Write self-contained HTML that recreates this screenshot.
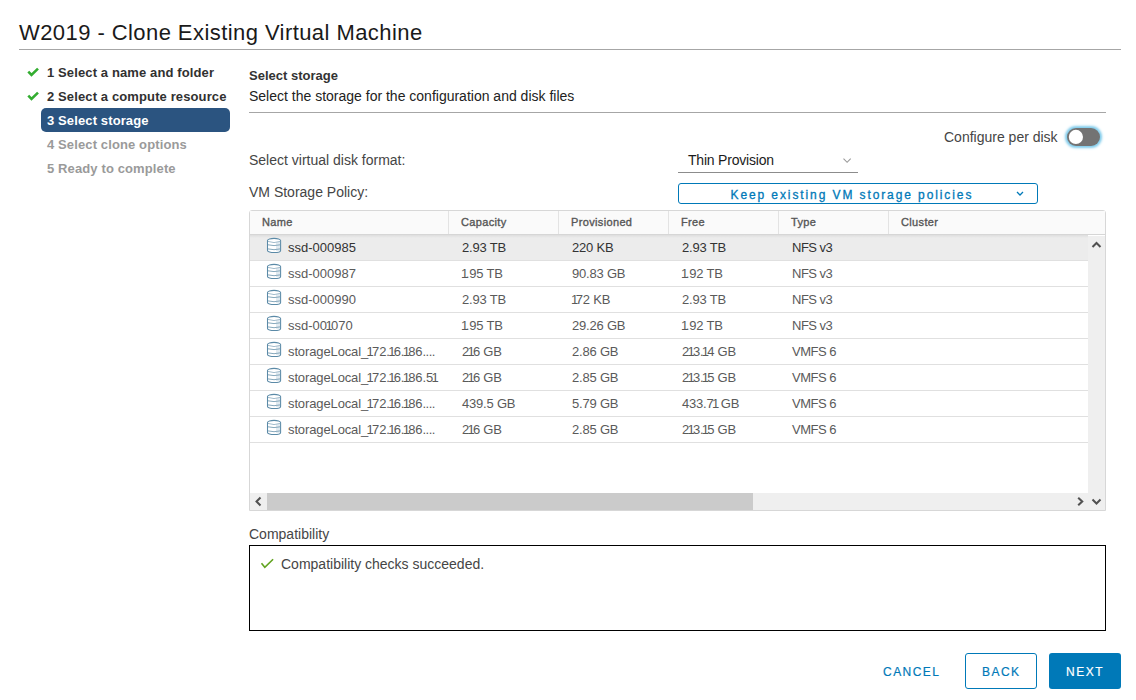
<!DOCTYPE html>
<html><head><meta charset="utf-8">
<style>
*{box-sizing:border-box;margin:0;padding:0}
html,body{width:1136px;height:700px;overflow:hidden;background:#fff}
body{font-family:"Liberation Sans",sans-serif;color:#313131;position:relative}
.a{position:absolute;white-space:nowrap}
.b{position:absolute}
.title{left:19px;top:19px;font-size:22px;line-height:28px;color:#1a1a1a;letter-spacing:0.43px}
.hr{position:absolute;height:1px;background:#a6a6a6}
.nav{left:47px;font-size:13px;font-weight:bold;line-height:24px;color:#313131;letter-spacing:0.12px}
.nav.dis{color:#9a9a9a}
.navsel{position:absolute;left:41px;top:108px;width:189px;height:24px;background:#2b5480;border-radius:5px}
.t14{font-size:14px;line-height:20px}
.lbl{color:#454545}
.th{font-size:11px;font-weight:normal;-webkit-text-stroke:0.35px #565656;line-height:23px;color:#565656;top:211px;letter-spacing:0.35px}
.td{font-size:13px;line-height:25px;color:#5a5a5a}
.cd{position:absolute;top:211px;width:1px;height:23px;background:#e3e3e3}
.rl{position:absolute;left:250px;width:838px;height:1px;background:#e0e0e0}
.ic{position:absolute;left:264px}
.o{margin:0 -1.6px}
.o1{margin:0 -2.2px 0 -1px}
.td.n{letter-spacing:-0.2px}
.td.ty{letter-spacing:-0.5px}
</style></head><body>
<div class="a title">W2019 - Clone Existing Virtual Machine</div>
<div class="hr" style="left:19px;top:49px;width:1102px"></div>

<svg class="b" style="left:24px;top:65px" width="20" height="16" viewBox="0 0 20 16"><path d="M4.3 6.6 L7.5 9.9 L14 3.6" fill="none" stroke="#33ad30" stroke-width="2.6"/></svg>
<svg class="b" style="left:24px;top:89px" width="20" height="16" viewBox="0 0 20 16"><path d="M4.3 6.6 L7.5 9.9 L14 3.6" fill="none" stroke="#33ad30" stroke-width="2.6"/></svg>
<div class="a nav" style="top:61px">1 Select a name and folder</div>
<div class="a nav" style="top:85px">2 Select a compute resource</div>
<div class="navsel"></div>
<div class="a nav" style="top:109px;color:#fff">3 Select storage</div>
<div class="a nav dis" style="top:133px">4 Select clone options</div>
<div class="a nav dis" style="top:157px">5 Ready to complete</div>

<div class="a" style="left:249px;top:66px;font-size:13px;font-weight:bold;line-height:20px;color:#333">Select storage</div>
<div class="a t14" style="left:249px;top:86px;color:#222">Select the storage for the configuration and disk files</div>
<div class="hr" style="left:249px;top:112px;width:857px"></div>

<div class="a t14" style="left:944px;top:127px;color:#454545">Configure per disk</div>
<div class="b" style="left:1067px;top:128px;width:33px;height:18px;border-radius:9px;background:#737373;box-shadow:0 0 2.5px 2px #7fcbeb"></div>
<svg class="b" style="left:1067px;top:128px" width="33" height="18" viewBox="0 0 33 18"><circle cx="8.9" cy="8.9" r="7.1" fill="#fff"/></svg>

<div class="a t14 lbl" style="left:249px;top:150px">Select virtual disk format:</div>
<div class="a t14" style="left:688px;top:150px;color:#1b1b1b;letter-spacing:-0.2px">Thin Provision</div>
<div class="b" style="left:678px;top:172px;width:180px;height:1px;background:#8c8c8c"></div>
<svg class="b" style="left:842px;top:157px" width="11" height="8" viewBox="0 0 11 8"><path d="M1.5 1.7 L5.1 5.3 L8.7 1.7" fill="none" stroke="#9a9a9a" stroke-width="1.1"/></svg>

<div class="a t14 lbl" style="left:249px;top:182px">VM Storage Policy:</div>
<div class="b" style="left:678px;top:183px;width:360px;height:21px;border:1px solid #0079b8;border-radius:3px"></div>
<div class="a" style="left:730.5px;top:184.5px;font-size:12px;line-height:20px;letter-spacing:1.9px;color:#0079b8;-webkit-text-stroke:0.3px #0079b8">Keep existing VM storage policies</div>
<svg class="b" style="left:1015px;top:190px" width="10" height="8" viewBox="0 0 10 8"><path d="M2 2 L5 5 L8 2" fill="none" stroke="#0079b8" stroke-width="1.3"/></svg>

<!-- table -->
<div class="b" style="left:249px;top:210px;width:857px;height:301px;border:1px solid #d7d7d7;border-radius:3px 3px 0 0"></div>
<div class="b" style="left:250px;top:211px;width:855px;height:23px;background:#fafafa"></div>
<div class="b" style="left:250px;top:234px;width:855px;height:1px;background:#d6d6d6"></div>
<div class="cd" style="left:448px"></div><div class="cd" style="left:558px"></div><div class="cd" style="left:668px"></div><div class="cd" style="left:778px"></div><div class="cd" style="left:888px"></div>
<div class="a th" style="left:262px">Name</div>
<div class="a th" style="left:461px">Capacity</div>
<div class="a th" style="left:571px">Provisioned</div>
<div class="a th" style="left:681px">Free</div>
<div class="a th" style="left:791px">Type</div>
<div class="a th" style="left:901px">Cluster</div>

<div class="b" style="left:250px;top:235px;width:838px;height:25px;background:#ececec"></div>
<div class="b" style="left:250px;top:235px;width:838px;height:3px;background:linear-gradient(#dedede,#ececec)"></div>
<div class="rl" style="top:260px"></div><div class="rl" style="top:286px"></div><div class="rl" style="top:312px"></div><div class="rl" style="top:338px"></div><div class="rl" style="top:364px"></div><div class="rl" style="top:390px"></div><div class="rl" style="top:416px"></div><div class="rl" style="top:442px"></div>

<!-- rows -->
<svg width="0" height="0" style="position:absolute"><defs><g id="db"><path d="M3.5 5.6 C3.5 2.6 16.6 2.6 16.6 5.6 L16.6 15.4 C16.6 18.2 3.5 18.2 3.5 15.4 Z" fill="#fff" stroke="#5b8aa7" stroke-width="1.05"/><rect x="12" y="7" width="4" height="9" fill="#e1eaf0"/><path d="M4 6.4 Q10 8.8 16.1 6.4" fill="none" stroke="#9ab6c7" stroke-width="0.9"/><path d="M4 9.8 Q10 11.4 16.1 9.8 M4 13.9 Q10 15.5 16.1 13.9" fill="none" stroke="#86a8bc" stroke-width="1"/></g></defs></svg>
<svg class="ic" style="top:235px" width="20" height="22" viewBox="0 0 20 22"><use href="#db"/></svg>
<div class="a td" style="left:288px;top:235px;color:#333">ssd-000985</div>
<div class="a td n" style="left:462px;top:235px;color:#333">2.93 TB</div>
<div class="a td n" style="left:572px;top:235px;color:#333">220 KB</div>
<div class="a td n" style="left:682px;top:235px;color:#333">2.93 TB</div>
<div class="a td n ty" style="left:792px;top:235px;color:#333">NFS v3</div>
<svg class="ic" style="top:261px" width="20" height="22" viewBox="0 0 20 22"><use href="#db"/></svg>
<div class="a td" style="left:288px;top:261px">ssd-000987</div>
<div class="a td n" style="left:462px;top:261px"><span class="o1">1</span>.95 TB</div>
<div class="a td n" style="left:572px;top:261px">90.83 GB</div>
<div class="a td n" style="left:682px;top:261px"><span class="o1">1</span>.92 TB</div>
<div class="a td n ty" style="left:792px;top:261px">NFS v3</div>
<svg class="ic" style="top:287px" width="20" height="22" viewBox="0 0 20 22"><use href="#db"/></svg>
<div class="a td" style="left:288px;top:287px">ssd-000990</div>
<div class="a td n" style="left:462px;top:287px">2.93 TB</div>
<div class="a td n" style="left:572px;top:287px"><span class="o1">1</span>72 KB</div>
<div class="a td n" style="left:682px;top:287px">2.93 TB</div>
<div class="a td n ty" style="left:792px;top:287px">NFS v3</div>
<svg class="ic" style="top:313px" width="20" height="22" viewBox="0 0 20 22"><use href="#db"/></svg>
<div class="a td" style="left:288px;top:313px">ssd-00<span class="o">1</span>070</div>
<div class="a td n" style="left:462px;top:313px"><span class="o1">1</span>.95 TB</div>
<div class="a td n" style="left:572px;top:313px">29.26 GB</div>
<div class="a td n" style="left:682px;top:313px"><span class="o1">1</span>.92 TB</div>
<div class="a td n ty" style="left:792px;top:313px">NFS v3</div>
<svg class="ic" style="top:339px" width="20" height="22" viewBox="0 0 20 22"><use href="#db"/></svg>
<div class="a td" style="left:288px;top:339px;letter-spacing:-0.12px">storageLocal_<span class="o">1</span>72.<span class="o">1</span>6.<span class="o">1</span>86<span style="letter-spacing:-0.5px">....</span></div>
<div class="a td n" style="left:462px;top:339px">2<span class="o">1</span>6 GB</div>
<div class="a td n" style="left:572px;top:339px">2.86 GB</div>
<div class="a td n" style="left:682px;top:339px">2<span class="o">1</span>3.<span class="o">1</span>4 GB</div>
<div class="a td n ty" style="left:792px;top:339px">VMFS 6</div>
<svg class="ic" style="top:365px" width="20" height="22" viewBox="0 0 20 22"><use href="#db"/></svg>
<div class="a td" style="left:288px;top:365px;letter-spacing:-0.12px">storageLocal_<span class="o">1</span>72.<span class="o">1</span>6.<span class="o">1</span>86.5<span class="o">1</span></div>
<div class="a td n" style="left:462px;top:365px">2<span class="o">1</span>6 GB</div>
<div class="a td n" style="left:572px;top:365px">2.85 GB</div>
<div class="a td n" style="left:682px;top:365px">2<span class="o">1</span>3.<span class="o">1</span>5 GB</div>
<div class="a td n ty" style="left:792px;top:365px">VMFS 6</div>
<svg class="ic" style="top:391px" width="20" height="22" viewBox="0 0 20 22"><use href="#db"/></svg>
<div class="a td" style="left:288px;top:391px;letter-spacing:-0.12px">storageLocal_<span class="o">1</span>72.<span class="o">1</span>6.<span class="o">1</span>86<span style="letter-spacing:-0.5px">....</span></div>
<div class="a td n" style="left:462px;top:391px">439.5 GB</div>
<div class="a td n" style="left:572px;top:391px">5.79 GB</div>
<div class="a td n" style="left:682px;top:391px">433.7<span class="o">1</span> GB</div>
<div class="a td n ty" style="left:792px;top:391px">VMFS 6</div>
<svg class="ic" style="top:417px" width="20" height="22" viewBox="0 0 20 22"><use href="#db"/></svg>
<div class="a td" style="left:288px;top:417px;letter-spacing:-0.12px">storageLocal_<span class="o">1</span>72.<span class="o">1</span>6.<span class="o">1</span>86<span style="letter-spacing:-0.5px">....</span></div>
<div class="a td n" style="left:462px;top:417px">2<span class="o">1</span>6 GB</div>
<div class="a td n" style="left:572px;top:417px">2.85 GB</div>
<div class="a td n" style="left:682px;top:417px">2<span class="o">1</span>3.<span class="o">1</span>5 GB</div>
<div class="a td n ty" style="left:792px;top:417px">VMFS 6</div>
<!-- scrollbars -->
<div class="b" style="left:1088px;top:236px;width:17px;height:274px;background:#efefef"></div>
<svg class="b" style="left:1088px;top:235.5px" width="17" height="17" viewBox="0 0 17 17"><path d="M4.5 11 L8.5 7 L12.5 11" fill="none" stroke="#505050" stroke-width="2"/></svg>
<svg class="b" style="left:1088px;top:493px" width="17" height="17" viewBox="0 0 17 17"><path d="M4.5 6.5 L8.5 10.5 L12.5 6.5" fill="none" stroke="#505050" stroke-width="2"/></svg>
<div class="b" style="left:250px;top:493px;width:838px;height:17px;background:#efefef"></div>
<div class="b" style="left:267px;top:493px;width:486px;height:17px;background:#cbcbcb"></div>
<svg class="b" style="left:250px;top:493px" width="17" height="17" viewBox="0 0 17 17"><path d="M10.5 4.5 L6.5 8.5 L10.5 12.5" fill="none" stroke="#505050" stroke-width="2"/></svg>
<svg class="b" style="left:1071px;top:493px" width="17" height="17" viewBox="0 0 17 17"><path d="M7.2 4.8 L11.2 8.5 L7.2 12.2" fill="none" stroke="#525252" stroke-width="2.1"/></svg>

<!-- compatibility -->
<div class="a t14 lbl" style="left:249px;top:524px">Compatibility</div>
<div class="b" style="left:249px;top:545px;width:857px;height:86px;border:1px solid #000"></div>
<svg class="b" style="left:258px;top:556px" width="18" height="15" viewBox="0 0 18 15"><path d="M3.5 7.3 L6.8 11.3 L15.1 3.2" fill="none" stroke="#62a420" stroke-width="1.6"/></svg>
<div class="a t14" style="left:281px;top:554px;color:#454545">Compatibility checks succeeded.</div>

<!-- buttons -->
<div class="a" style="left:883px;top:662px;font-size:12px;line-height:20px;letter-spacing:1.46px;color:#0079b8;-webkit-text-stroke:0.2px #0079b8">CANCEL</div>
<div class="b" style="left:965px;top:653px;width:72px;height:36px;border:1px solid #0079b8;border-radius:3px"></div>
<div class="a" style="left:982px;top:662px;font-size:12px;line-height:20px;letter-spacing:1.44px;color:#0079b8;-webkit-text-stroke:0.2px #0079b8">BACK</div>
<div class="b" style="left:1049px;top:653px;width:72px;height:36px;background:#0079b8;border-radius:3px"></div>
<div class="a" style="left:1066px;top:662px;font-size:12px;line-height:20px;letter-spacing:1.53px;color:#fff;-webkit-text-stroke:0.2px #fff">NEXT</div>
</body></html>
